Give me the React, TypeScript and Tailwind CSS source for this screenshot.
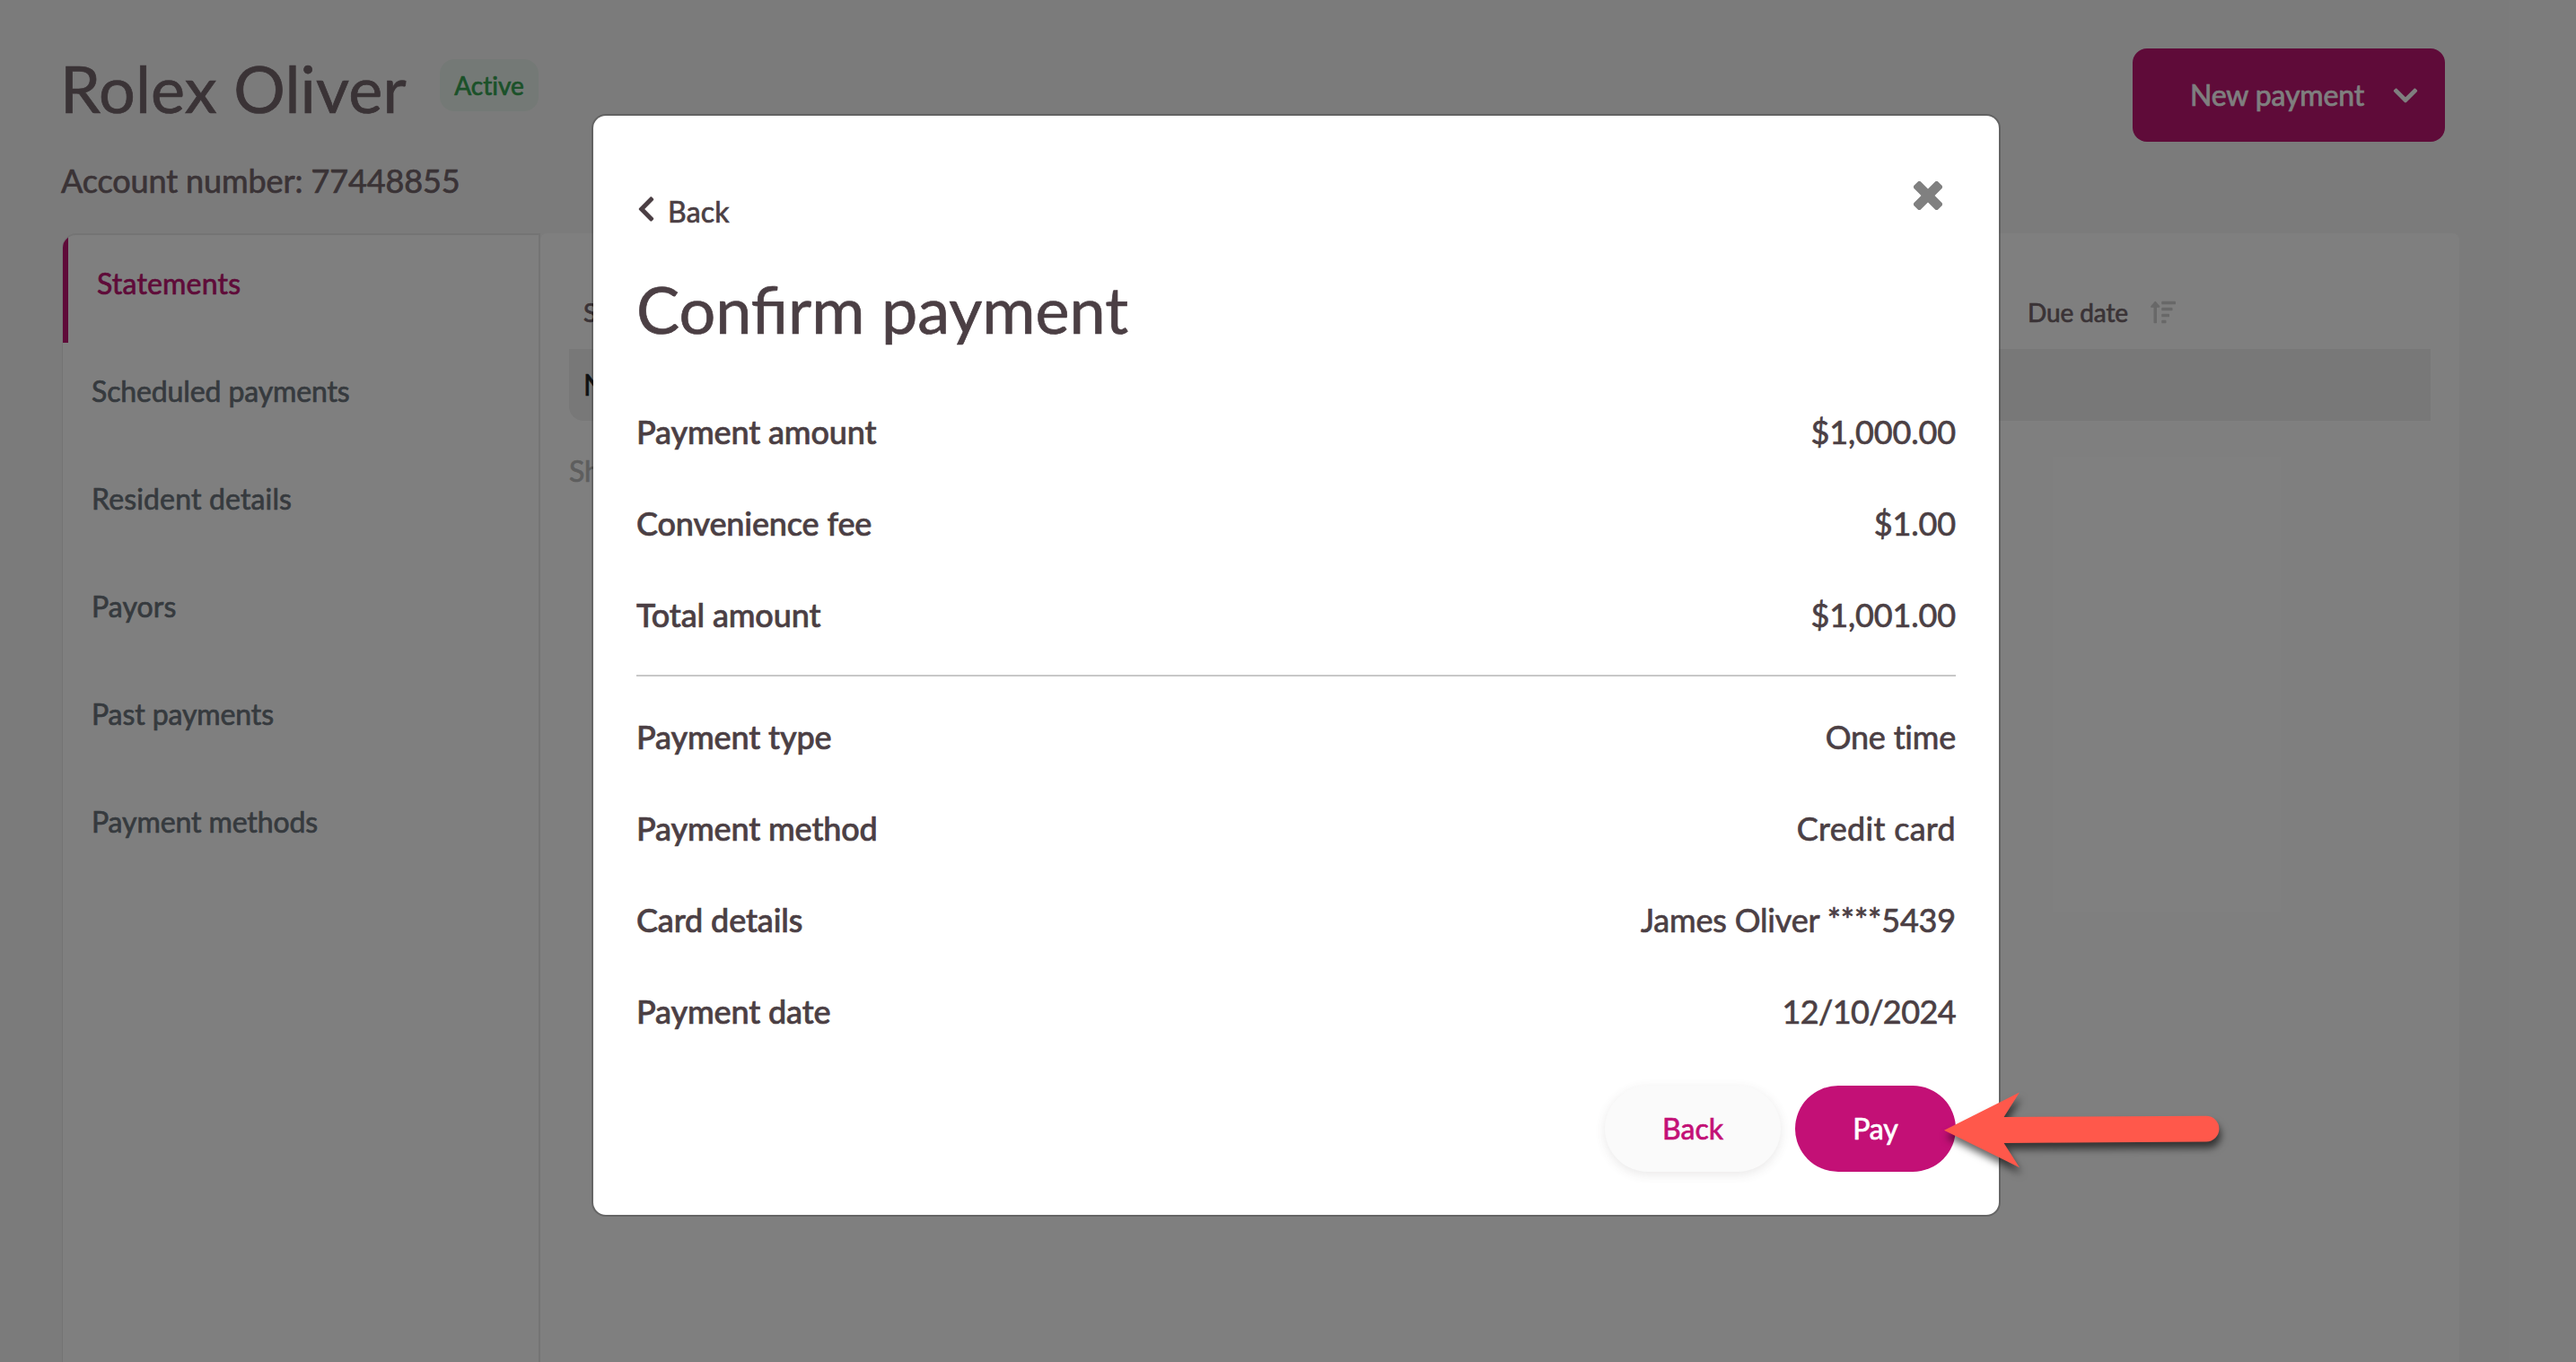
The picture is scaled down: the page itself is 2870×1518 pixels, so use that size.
import { FaChevronDown, FaChevronLeft, FaSortAmountUp } from "react-icons/fa";

const NAV_ITEMS = [
  { label: "Statements", tracking: "tracking-[0.2px]" },
  { label: "Scheduled payments", tracking: "tracking-[-0.12px]" },
  { label: "Resident details", tracking: "tracking-[0.15px]" },
  { label: "Payors", tracking: "tracking-[0.1px]" },
  { label: "Past payments", tracking: "tracking-[-0.1px]" },
  { label: "Payment methods", tracking: "tracking-[-0.1px]" },
];

const AMOUNTS = [
  { label: "Payment amount", value: "$1,000.00", tracking: "tracking-[-0.15px]" },
  { label: "Convenience fee", value: "$1.00", tracking: "tracking-[-0.15px]" },
  { label: "Total amount", value: "$1,001.00", tracking: "tracking-[-0.15px]" },
];

const DETAILS = [
  { label: "Payment type", value: "One time", tracking: "tracking-[-0.2px]" },
  { label: "Payment method", value: "Credit card", tracking: "tracking-[0.3px]" },
  { label: "Card details", value: "James Oliver ****5439", tracking: "tracking-[-0.18px]" },
  { label: "Payment date", value: "12/10/2024", tracking: "tracking-[-0.6px]" },
];

function SummaryRow({ label, value, tracking }: (typeof AMOUNTS)[number]) {
  return (
    <div className="flex h-[102px] items-center justify-between text-[36px] leading-[54px]">
      <dt className="font-medium tracking-[-0.15px]">{label}</dt>
      <dd className={tracking}>{value}</dd>
    </div>
  );
}

function AccountPage() {
  return (
    <div className="flex h-full flex-col bg-[#f7f7f7] pl-[69px]">
      <header className="flex h-[260px] shrink-0 justify-between pr-[146px]">
        <div>
          <div className="flex items-start pt-[55px]">
            <h1 className="-ml-[2px] w-[423px] whitespace-nowrap text-[72px] leading-[86px] tracking-[0.15px] text-[#75676d]">
              Rolex Oliver
            </h1>
            <span className="mt-[11px] flex h-[58px] w-[110px] items-center justify-center rounded-[16px] bg-[#e9f3ec] text-[28px] text-[#37a353] [font-variant-ligatures:none]">
              Active
            </span>
          </div>
          <p className="-ml-[1px] mt-[33px] text-[36px] leading-[54px] tracking-[-0.12px] text-[#75676d]">
            Account number: 77448855
          </p>
        </div>
        <button className="mt-[54px] flex h-[104px] w-[348px] items-center rounded-[16px] bg-[#be1673] pl-[64px] text-[32px] text-white">
          <span className="w-[226px] text-left tracking-[-0.15px]">New payment</span>
          <FaChevronDown className="h-[31px] w-[28px]" />
        </button>
      </header>

      <div className="flex min-h-0 flex-1">
        <nav className="w-[533px] overflow-hidden rounded-tl-[16px] border-2 border-b-0 border-l border-[#e8e8e8] bg-white">
          {NAV_ITEMS.map(({ label, tracking }, i) => (
            <a key={label} className={tracking}>
              <span
                className={
                  i === 0
                    ? "flex h-[120px] border-l-[6px] border-[#be1673] pl-[32px] pt-[30px] text-[32px] leading-[48px] text-[#be1673]"
                    : "flex h-[120px] pl-[32px] pt-[30px] text-[32px] leading-[48px] text-[#6c757d]"
                }
              >
                {label}
              </span>
            </a>
          ))}
        </nav>

        <main className="w-[2138px] rounded-t-[8px] bg-white px-8">
          <div className="flex h-[129px] items-center pl-[16px] pt-[47px] text-[28px] text-[#75676d]">
            <span className="w-[1609px]">Sent</span>
            <span className="w-[137px] tracking-[-0.1px]">Due date</span>
            <FaSortAmountUp className="h-[28px] w-[28px] text-[#d0d0d0]" />
          </div>
          <div className="flex h-[80px] items-center rounded-bl-[16px] bg-[#f0f0f0] pl-[16px] text-[32px] text-[#212529]">
            No statements
          </div>
          <p className="mt-[32px] text-[32px] leading-[48px] text-[#bdbdbd]">Showing 0 of 0</p>
        </main>
      </div>
    </div>
  );
}

function CloseIcon() {
  return (
    <svg className="mr-[15px] h-[32px] w-[32px]" viewBox="-16 -16 32 32" fill="#808080">
      <rect x="-18.9" y="-5.3" width="37.8" height="10.6" rx="2.6" transform="rotate(45)" />
      <rect x="-18.9" y="-5.3" width="37.8" height="10.6" rx="2.6" transform="rotate(-45)" />
    </svg>
  );
}

function Arrow() {
  return (
    <svg
      className="absolute left-[2140px] top-[1200px] h-[130px] w-[350px]"
      viewBox="2140 1200 350 130"
      style={{ filter: "drop-shadow(2px 7px 4px rgba(0,0,0,0.6))" }}
    >
      <path
        d="M2166 1259.7 L2250 1217.5 L2232.6 1245 L2458 1243.7 A14.4 14.4 0 0 1 2458 1272.5 L2232.6 1274 L2250 1301.3 Z"
        fill="#ff584b"
      />
    </svg>
  );
}

export default function App() {
  return (
    <div className="relative h-[1518px] w-[2870px] overflow-hidden font-['Lato',sans-serif] [-webkit-text-stroke:0.7px]">
      <AccountPage />

      <div className="absolute inset-0 flex items-start bg-black/50 pl-[659px] pt-[127px]">
        <section className="w-[1570px] rounded-[16px] border-2 border-black/20 bg-white bg-clip-padding px-[48px] pb-[48px] pt-[73px] text-[#4b3f44]">
          <div className="flex h-[88px] justify-between">
            <button className="flex items-start text-[32px] leading-[48px]">
              <FaChevronLeft className="ml-[1px] mt-[15px] h-[32px] w-[20px]" />
              <span className="ml-[14px] mt-[10px] tracking-[0.2px]">Back</span>
            </button>
            <CloseIcon />
          </div>

          <h2 className="mt-[11px] text-[72px] leading-[86px]">Confirm payment</h2>

          <dl className="mt-[43px]">
            {AMOUNTS.map((row) => (
              <SummaryRow key={row.label} {...row} />
            ))}
          </dl>
          <hr className="mt-[16px] border-t-2 border-[#c8c8c8]" />
          <dl className="mt-[16px]">
            {DETAILS.map((row) => (
              <SummaryRow key={row.label} {...row} />
            ))}
          </dl>

          <div className="mt-[32px] flex justify-end gap-4 text-[32px]">
            <button className="h-[96px] w-[196px] rounded-full bg-[#fafafa] text-[#c31076] shadow-[0_3px_12px_rgba(75,63,68,0.12)]">
              Back
            </button>
            <button className="h-[96px] w-[179px] rounded-full bg-[#c31076] text-white">Pay</button>
          </div>
        </section>
      </div>

      <Arrow />
    </div>
  );
}
